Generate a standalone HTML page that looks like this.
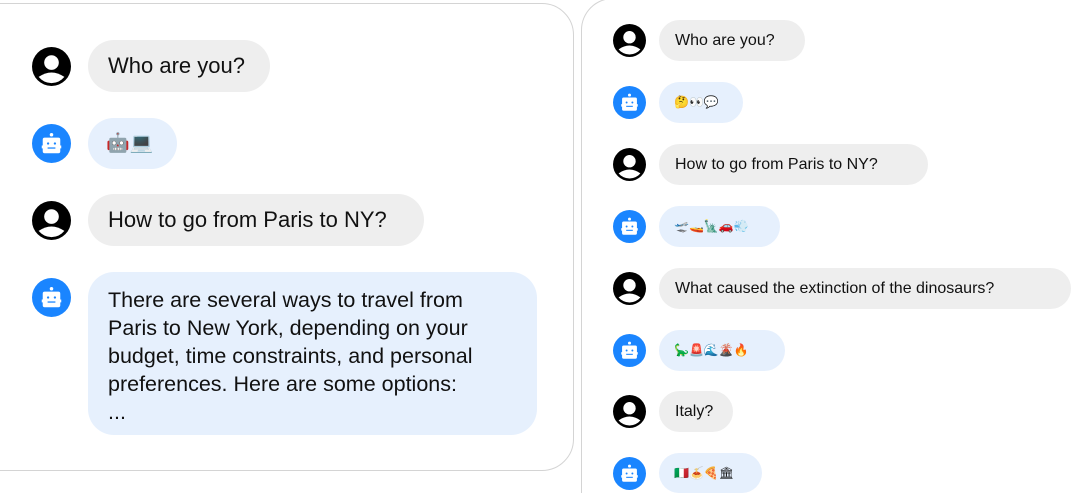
<!DOCTYPE html>
<html><head><meta charset="utf-8"><style>
html,body{margin:0;width:1085px;height:493px;overflow:hidden}
body{background:#fff;font-family:"Liberation Sans","DejaVu Sans",sans-serif;color:#111;position:relative}
.panel{position:absolute;border:1.5px solid #d4d4d4;border-radius:32px;box-sizing:border-box}
.row{position:absolute;display:flex;align-items:center}
.b{border-radius:26px;background:#eeeeee;white-space:nowrap}
.bot .b{background:#e6f0fd}
svg{flex:none}
</style></head><body>
<svg width="0" height="0" style="position:absolute"><defs>
<symbol id="u" viewBox="-20 -20 40 40"><circle r="20" fill="#000"/><circle cx="0" cy="-4" r="7.5" fill="#fff"/><path d="M-13.2 10.7 Q0 1.5 13.2 10.7 A17 17 0 0 1 -13.2 10.7Z" fill="#fff"/></symbol>
<symbol id="r" viewBox="-20 -20 40 40"><circle r="20" fill="#1a85ff"/><circle cx="0" cy="-9" r="1.8" fill="#fff"/><path d="M-7 -6 h14 a2 2 0 0 1 2 2 v6 h1 v3 h-1 v3 a2 2 0 0 1 -2 2 h-14 a2 2 0 0 1 -2 -2 v-3 h-1 v-3 h1 v-6 a2 2 0 0 1 2 -2z" fill="#fff"/><circle cx="-3.5" cy="0" r="1.2" fill="#1a85ff"/><circle cx="3.5" cy="0" r="1.2" fill="#1a85ff"/><rect x="-4" y="4" width="8" height="1.3" fill="#1a85ff"/></symbol>
</defs></svg>

<div class="panel" style="left:-30px;top:3px;width:604px;height:468px"></div>
<div class="panel" style="left:581px;top:-2px;width:504px;height:495px;border-bottom:none;border-right:none;border-radius:32px 0 0 0"></div>

<!-- left -->
<div class="row" style="left:32px;top:40px;font-size:22px"><svg width="39" height="39" style="margin-right:17px"><use href="#u"/></svg><div class="b" style="height:52px;line-height:52px;padding:0 20px;width:142px">Who are you?</div></div>
<div class="row bot" style="left:32px;top:118px;font-size:19px"><svg width="39" height="39" style="margin-right:17px"><use href="#r"/></svg><div class="b" style="height:51px;line-height:51px;padding:0 18px;width:53px">🤖💻</div></div>
<div class="row" style="left:32px;top:194px;font-size:22px"><svg width="39" height="39" style="margin-right:17px"><use href="#u"/></svg><div class="b" style="height:52px;line-height:52px;padding:0 20px;width:296px">How to go from Paris to NY?</div></div>
<div class="row bot" style="left:32px;top:272px;font-size:21.5px;align-items:flex-start"><svg width="39" height="39" style="margin-right:17px;margin-top:6px"><use href="#r"/></svg><div class="b" style="height:163px;padding:14px 20px;box-sizing:border-box;width:449px;white-space:normal;line-height:28px">There are several ways to travel from Paris to New York, depending on your budget, time constraints, and personal preferences. Here are some options:<br>...</div></div>

<!-- right -->
<div class="row" style="left:613px;top:20px;font-size:16px"><svg width="33" height="33" style="margin-right:13px"><use href="#u"/></svg><div class="b" style="height:41px;line-height:41px;padding:0 16px;width:114px">Who are you?</div></div>
<div class="row bot" style="left:613px;top:82px;font-size:12px"><svg width="33" height="33" style="margin-right:13px"><use href="#r"/></svg><div class="b" style="height:41px;line-height:41px;padding:0 15px;width:54px">🤔👀💬</div></div>
<div class="row" style="left:613px;top:144px;font-size:16px"><svg width="33" height="33" style="margin-right:13px"><use href="#u"/></svg><div class="b" style="height:41px;line-height:41px;padding:0 16px;width:237px">How to go from Paris to NY?</div></div>
<div class="row bot" style="left:613px;top:206px;font-size:12px"><svg width="33" height="33" style="margin-right:13px"><use href="#r"/></svg><div class="b" style="height:41px;line-height:41px;padding:0 15px;width:91px">🛫🚤🗽🚗💨</div></div>
<div class="row" style="left:613px;top:268px;font-size:16px"><svg width="33" height="33" style="margin-right:13px"><use href="#u"/></svg><div class="b" style="height:41px;line-height:41px;padding:0 16px;width:380px">What caused the extinction of the dinosaurs?</div></div>
<div class="row bot" style="left:613px;top:330px;font-size:12px"><svg width="33" height="33" style="margin-right:13px"><use href="#r"/></svg><div class="b" style="height:41px;line-height:41px;padding:0 15px;width:96px">🦕🚨🌊🌋🔥</div></div>
<div class="row" style="left:613px;top:391px;font-size:16px"><svg width="33" height="33" style="margin-right:13px"><use href="#u"/></svg><div class="b" style="height:41px;line-height:41px;padding:0 16px;width:42px">Italy?</div></div>
<div class="row bot" style="left:613px;top:453px;font-size:12px"><svg width="33" height="33" style="margin-right:13px"><use href="#r"/></svg><div class="b" style="height:40px;line-height:40px;padding:0 15px;width:73px">🇮🇹🍝🍕🏛</div></div>
</body></html>
